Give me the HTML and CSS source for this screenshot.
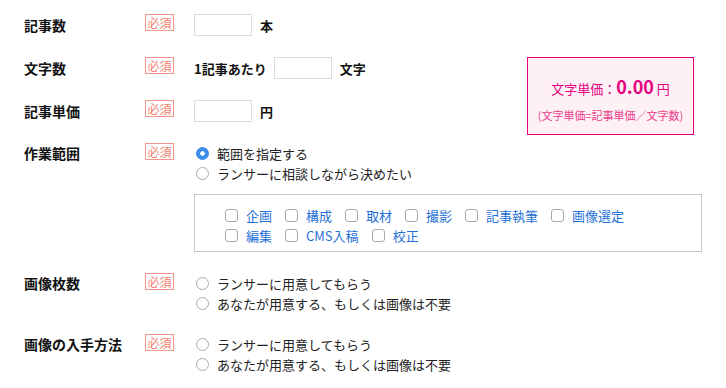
FILE: index.html
```html
<!DOCTYPE html>
<html lang="ja">
<head>
<meta charset="utf-8">
<title>記事作成の依頼</title>
<link rel="stylesheet" href="styles.css">
</head>
<body>
<form class="form">
	<div class="row row--input">
		<div class="label">記事数</div>
		<span class="badge">必須</span>
		<div class="field">
			<input type="text" class="num">
			<span class="unit">本</span>
		</div>
	</div>
	<div class="row row--input">
		<div class="label">文字数</div>
		<span class="badge">必須</span>
		<div class="field">
			<span class="unit unit--pre">1記事あたり</span>
			<input type="text" class="num">
			<span class="unit">文字</span>
		</div>
		<div class="summary">
			<div class="summary-main">文字単価：<b>0.00</b> 円</div>
			<div class="summary-note">(文字単価=記事単価／文字数)</div>
		</div>
	</div>
	<div class="row row--input">
		<div class="label">記事単価</div>
		<span class="badge">必須</span>
		<div class="field">
			<input type="text" class="num">
			<span class="unit">円</span>
		</div>
	</div>

	<div class="row row--radio">
		<div class="label">作業範囲</div>
		<span class="badge">必須</span>
		<div class="field field--stack">
			<label class="radio"><span class="dot is-checked"></span>範囲を指定する</label>
			<label class="radio"><span class="dot"></span>ランサーに相談しながら決めたい</label>
			<div class="scope">
				<label class="check"><span class="box"></span>企画</label>
				<label class="check"><span class="box"></span>構成</label>
				<label class="check"><span class="box"></span>取材</label>
				<label class="check"><span class="box"></span>撮影</label>
				<label class="check"><span class="box"></span>記事執筆</label>
				<label class="check"><span class="box"></span>画像選定</label>
				<label class="check"><span class="box"></span>編集</label>
				<label class="check"><span class="box"></span>CMS入稿</label>
				<label class="check"><span class="box"></span>校正</label>
			</div>
		</div>
	</div>

	<div class="row row--radio">
		<div class="label">画像枚数</div>
		<span class="badge">必須</span>
		<div class="field field--stack">
			<label class="radio"><span class="dot"></span>ランサーに用意してもらう</label>
			<label class="radio"><span class="dot"></span>あなたが用意する、もしくは画像は不要</label>
		</div>
	</div>

	<div class="row row--radio">
		<div class="label">画像の入手方法</div>
		<span class="badge">必須</span>
		<div class="field field--stack">
			<label class="radio"><span class="dot"></span>ランサーに用意してもらう</label>
			<label class="radio"><span class="dot"></span>あなたが用意する、もしくは画像は不要</label>
		</div>
	</div>
</form>
</body>
</html>
```

FILE: styles.css
```css
* {
	margin:0;
	padding:0;
	box-sizing:border-box;
}
body {
	padding:14px 24px 0 24px;
	font-family:"Noto Sans CJK JP", "Noto Sans", sans-serif;
	font-size:13px;
	color:#222;
	background:#fff;
}
.row {
	display:flex;
	align-items:flex-start;
	margin-bottom:21px;
}
.row--input {
	height:22px;
}
.row--radio {
	margin-top:1px;
}
.label {
	width:121px;
	flex:none;
	font-size:14px;
	font-weight:bold;
	color:#111;
	line-height:22px;
}
.row--radio .label {
	line-height:20px;
}
.badge {
	flex:none;
	width:29px;
	height:17px;
	margin-right:20px;
	border:1px solid #f5948a;
	color:#f3806f;
	font-size:12px;
	line-height:15px;
	text-align:center;
}
.field {
	display:flex;
	align-items:center;
	height:22px;
}
.field--stack {
	display:block;
	height:auto;
	flex:1;
}
.num {
	width:58px;
	height:22px;
	border:1px solid #dcdcdc;
	background:#fff;
	font:inherit;
}
.unit {
	margin-left:8px;
	font-weight:bold;
	color:#111;
}
.unit--pre {
	margin-left:0;
	margin-right:7px;
}

/* summary box */
.summary {
	margin-left:auto;
	margin-right:8px;
	width:167px;
	padding:16px 0 11px;
	border:1px solid #e6007e;
	background:#fdf1f6;
	color:#e6007e;
	text-align:center;
}
.summary-main {
	line-height:24px;
}
.summary-main b {
	font-size:18px;
	font-weight:bold;
}
.summary-note {
	margin-top:6px;
	font-size:11px;
	line-height:16px;
	color:#ec3f8c;
}

/* radios */
.radio {
	display:flex;
	align-items:center;
	height:20px;
	color:#222;
}
.dot {
	flex:none;
	width:13px;
	height:13px;
	margin:0 8px 0 2px;
	border:1px solid #aaa;
	border-radius:50%;
	background:#fff;
}
.dot.is-checked {
	border-color:#3c8ceb;
	background:#3c8ceb radial-gradient(circle, #fff 0 2px, transparent 2.5px);
}

/* work scope */
.scope {
	display:flex;
	flex-wrap:wrap;
	margin-top:11px;
	padding:10px 30px 6px 30px;
	border:1px solid #c3cad5;
}
.check {
	display:flex;
	align-items:center;
	height:20px;
	margin-right:13px;
	color:#1f6fd6;
}
.box {
	flex:none;
	width:13px;
	height:13px;
	margin-right:8px;
	border:1px solid #a9a9a9;
	border-radius:3px;
	background:#fff;
}
```
